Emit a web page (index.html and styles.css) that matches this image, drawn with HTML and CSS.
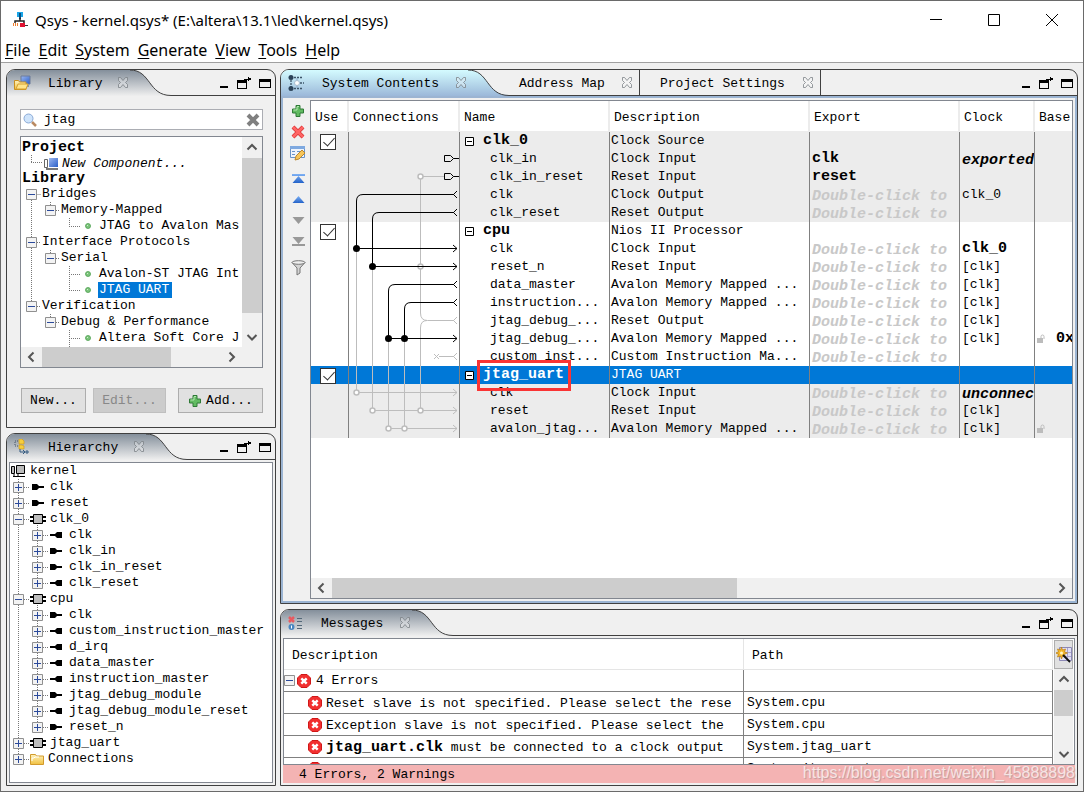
FILE: index.html
```html
<!DOCTYPE html>
<html lang="en">
<head>
<meta charset="utf-8">
<title>Qsys - kernel.qsys</title>
<link rel="stylesheet" href="styles.css">
</head>
<body>
<svg class="defs" width="0" height="0" aria-hidden="true">
  <defs>
    <linearGradient id="g-grey" x1="0" y1="0" x2="0" y2="1"><stop offset="0" stop-color="#848f9b"/><stop offset="1" stop-color="#efefef"/></linearGradient>
    <linearGradient id="g-blue" x1="0" y1="0" x2="0" y2="1"><stop offset="0" stop-color="#d4fbff"/><stop offset="1" stop-color="#9bb8d9"/></linearGradient>
    <linearGradient id="g-folder" x1="0" y1="0" x2="0" y2="1"><stop offset="0" stop-color="#fff3bd"/><stop offset="1" stop-color="#f0c040"/></linearGradient>
    <linearGradient id="g-screen" x1="0" y1="0" x2="1" y2="1"><stop offset="0" stop-color="#9db8f0"/><stop offset="1" stop-color="#2a5fc8"/></linearGradient>
    <linearGradient id="g-up" x1="0" y1="0" x2="0" y2="1"><stop offset="0" stop-color="#7fb2f5"/><stop offset="1" stop-color="#2463c9"/></linearGradient>
    <symbol id="curve-grey" viewBox="0 0 41 26"><path d="M0 0C21 0 18 25 41 25V26H0Z" fill="url(#g-grey)"/><path d="M0 0C21 0 18 25.500 41 25.500" fill="none" stroke="#404040"/></symbol>
    <symbol id="curve-blue" viewBox="0 0 41 26"><path d="M0 0C21 0 18 25 41 25V26H0Z" fill="url(#g-blue)"/><path d="M0 0C21 0 18 25.500 41 25.500" fill="none" stroke="#404040"/></symbol>
    <symbol id="close" viewBox="0 0 12 12"><path d="M1.500.5h2L6 3.500 8.500.5h2v3L8.500 5.500l2 2v3h-2L6 7.500 3.500 10.500h-2v-3l2-2-2-2Z" fill="#fff" fill-opacity=".3" stroke="#7b8187" stroke-width=".8"/></symbol>
    <symbol id="win-min" viewBox="0 0 9 14"><path d="M0 10h8v2H0z"/></symbol>
    <symbol id="win-float" viewBox="0 0 14 14"><path fill-rule="evenodd" d="M0 4h10v9H0zM1 7v5h8V7Z"/><path d="M7 3h4V1h1v1h2v2h-2v1h-1V4H9v2H7Z"/></symbol>
    <symbol id="win-max" viewBox="0 0 13 14"><path fill-rule="evenodd" d="M0 3h12v9H0zM1 6v5h10V6Z"/></symbol>
    <symbol id="plus" viewBox="0 0 14 14"><path d="M5 1.500h4V5h3.500v4H9v3.500H5V9H1.500V5H5Z" fill="#62bb62" stroke="#2f7a37"/><path d="M6 2.500h2M2.500 6H6V3" stroke="#b3e6af" fill="none"/></symbol>
    <symbol id="exp" viewBox="0 0 11 11"><path d="M.5.5h10v10H.5z" fill="#f3f3f3" stroke="#909090"/><path d="M2 5.500h7M5.500 2v7" stroke="#2b4a9b"/></symbol>
    <symbol id="col" viewBox="0 0 11 11"><path d="M.5.5h10v10H.5z" fill="#f3f3f3" stroke="#909090"/><path d="M2 5.500h7" stroke="#2b4a9b"/></symbol>
    <symbol id="box" viewBox="0 0 9 9"><path d="M.5.5h8v8h-8z" fill="#fff" stroke="#000"/><path d="M2 4.500h5" stroke="#000"/></symbol>
    <symbol id="pin-in" viewBox="0 0 14 8"><path d="M1 1h5l2 2h5v2H8L6 7H1Z"/></symbol>
    <symbol id="pin-out" viewBox="0 0 14 8"><path d="M13 1H8L6 3H1v2h5l2 2h5Z"/></symbol>
    <symbol id="chip" viewBox="0 0 16 10"><path d="M0 2h16v2H0zM0 6h16v2H0z"/><path d="M3.500.5h9v9h-9z" fill="#bdbdbd" stroke="#000"/></symbol>
    <symbol id="leaf" viewBox="0 0 6 6"><circle cx="3" cy="3" r="2.500" fill="#7cc47c" stroke="#4fa050" stroke-width=".8"/><path d="M2 2h1v1H2z" fill="#d2f0d0"/></symbol>
    <symbol id="folder" viewBox="0 0 14 12"><path d="M.5 11.500v-10h5l1 1.500h7v8.500Z" fill="url(#g-folder)" stroke="#d29a2c"/><path d="M2 8V5h2l1-1h4" stroke="#fff" fill="none"/></symbol>
    <symbol id="err" viewBox="0 0 14 14"><path d="M4 .5h6L13.500 4v6L10 13.500H4L.5 10V4Z" fill="#f23030" stroke="#d01818"/><path d="M4.300 4.300l5.400 5.400m0-5.400L4.300 9.700" stroke="#fff" stroke-width="2.400"/></symbol>
    <symbol id="lock" viewBox="0 0 8 9"><path d="M0 4h6v5H0z" fill="#bcbcbc"/><path d="M4 4V2.500Q4 1 5.500 1T7 2.500V5" stroke="#bcbcbc" fill="none"/></symbol>
    <symbol id="a-up" viewBox="0 0 12 12"><path d="M1.500 8.500 6 4l4.500 4.500" fill="none" stroke="#555" stroke-width="2"/></symbol>
    <symbol id="a-down" viewBox="0 0 12 12"><path d="M1.500 4 6 8.500 10.500 4" fill="none" stroke="#555" stroke-width="2"/></symbol>
    <symbol id="a-left" viewBox="0 0 12 12"><path d="M8.500 1.500 4 6l4.500 4.500" fill="none" stroke="#555" stroke-width="2"/></symbol>
    <symbol id="a-right" viewBox="0 0 12 12"><path d="M3.500 1.500 8 6l-4.500 4.500" fill="none" stroke="#555" stroke-width="2"/></symbol>
  </defs>
</svg>
<div class="window">
  <header class="titlebar">
    <svg width="16" height="16" viewBox="0 0 16 16"><path d="M5 0h6v5H5z" fill="#19a5e8"/><path d="M7 1h2v6H7z" fill="#0a4f80"/><path d="M8 6v3M3 11V9h9v3" fill="none" stroke="#222" stroke-width="1.500"/><path d="M1.500 14v-3m2 3v-3m2 3v-3" stroke="#f08030" fill="none"/><path d="M8 11h5v4H8z" fill="#e01030"/><path d="M13 13h3v1h-3z" fill="#333"/></svg>
    <h1>Qsys - kernel.qsys* (E:\altera\13.1\led\kernel.qsys)</h1>
    <div class="sysbuttons">
      <button type="button" aria-label="Minimize"><svg width="14" height="14" viewBox="0 0 14 14"><path d="M1 6.500h12" stroke="#000"/></svg></button>
      <button type="button" aria-label="Maximize"><svg width="14" height="14" viewBox="0 0 14 14"><path d="M1.500 1.500h11v11h-11z" fill="none" stroke="#000"/></svg></button>
      <button type="button" aria-label="Close"><svg width="14" height="14" viewBox="0 0 14 14"><path d="M1 1l12 12M13 1 1 13" stroke="#000"/></svg></button>
    </div>
  </header>
  <nav class="menu">
    <button type="button"><u>F</u>ile</button><button type="button"><u>E</u>dit</button><button type="button"><u>S</u>ystem</button><button type="button"><u>G</u>enerate</button><button type="button"><u>V</u>iew</button><button type="button"><u>T</u>ools</button><button type="button"><u>H</u>elp</button>
  </nav>
  <main class="workspace">
    <div class="side">
      <section class="panel">
        <div class="head">
          <div class="tab tab-lib">
            <svg width="17" height="16" viewBox="0 0 17 16"><path d="M7 1h9v8H7z" fill="url(#g-screen)" stroke="#6a7a9a"/><path d="M10 10h5v2h-5z" fill="#8b95a5"/><path d="M.5 14.500v-9h4l1 1.500H12v7.500Z" fill="url(#g-folder)" stroke="#c98f1f"/><path d="M2 14l2-5h10l-2 5Z" fill="#ffe48a" stroke="#d6a030"/></svg>
            <span>Library</span><svg class="x" width="12" height="12"><use href="#close"/></svg>
          </div>
          <svg class="curve" width="41" height="26"><use href="#curve-grey"/></svg>
          <div class="rest"><svg width="9" height="14"><use href="#win-min"/></svg><svg width="14" height="14"><use href="#win-float"/></svg><svg width="13" height="14"><use href="#win-max"/></svg></div>
        </div>
        <div class="lib-body">
          <label class="search">
            <svg width="14" height="14" viewBox="0 0 14 14"><path d="M9 9l4 4" stroke="#b98a62" stroke-width="2.500"/><circle cx="5.500" cy="5.500" r="4.500" fill="#cfe4fb" stroke="#8aa9d6"/></svg>
            <input type="text" value="jtag" aria-label="Search library">
            <svg width="14" height="14" viewBox="0 0 14 14"><path d="M2 2l10 10M12 2 2 12" stroke="#808080" stroke-width="4"/></svg>
          </label>
          <div class="treebox">
            <div class="tree lib-tree">
              <svg class="guides" width="222" height="211" viewBox="21 136 222 211"><g fill="none" stroke="#777" stroke-dasharray="1 1"><path d="M31.500 154v8M31 161.500h12M31.500 199v102M31.500 193.500h10M50 209.500h10M31 241.500h10M31 305.500h10M50 257.500h10M50 321.500h10M69.500 217v9M69 225.500h12M69.500 265v24M69 273.500h12M69 289.500h12M69.500 329v18M69 337.500h12M50.500 201v4M50.500 249v4M50.500 313v4"/></g></svg>
              <div class="row big">Project</div>
              <div class="row comp"><svg width="14" height="13" viewBox="0 0 14 13"><path d="M.5 1.500h3v8h-3z" fill="#fff" stroke="#666"/><path d="M5 0h9v9H5z" fill="url(#g-screen)"/><path d="M2 10h12v2H2z" fill="#777"/></svg><i>New Component...</i></div>
              <div class="row big short">Library</div>
              <div class="row l1"><svg width="11" height="11"><use href="#col"/></svg>Bridges</div>
              <div class="row l2"><svg width="11" height="11"><use href="#col"/></svg>Memory-Mapped</div>
              <div class="row l3"><svg width="6" height="6"><use href="#leaf"/></svg><span>JTAG to Avalon Mas</span></div>
              <div class="row l1"><svg width="11" height="11"><use href="#col"/></svg>Interface Protocols</div>
              <div class="row l2"><svg width="11" height="11"><use href="#col"/></svg>Serial</div>
              <div class="row l3"><svg width="6" height="6"><use href="#leaf"/></svg><span>Avalon-ST JTAG Int</span></div>
              <div class="row l3"><svg width="6" height="6"><use href="#leaf"/></svg><span class="sel">JTAG UART</span></div>
              <div class="row l1"><svg width="11" height="11"><use href="#col"/></svg>Verification</div>
              <div class="row l2"><svg width="11" height="11"><use href="#col"/></svg>Debug &amp; Performance</div>
              <div class="row l3"><svg width="6" height="6"><use href="#leaf"/></svg><span>Altera Soft Core J</span></div>
            </div>
            <div class="vbar"><svg width="12" height="12"><use href="#a-up"/></svg><i class="thumb"></i><svg width="12" height="12"><use href="#a-down"/></svg></div>
            <div class="hbar lib-h"><svg width="12" height="12"><use href="#a-left"/></svg><i class="thumb"></i><svg width="12" height="12"><use href="#a-right"/></svg></div>
          </div>
          <div class="actions">
            <button type="button" class="new">New...</button>
            <button type="button" class="edit" disabled>Edit...</button>
            <button type="button" class="add"><svg width="14" height="14"><use href="#plus"/></svg>Add...</button>
          </div>
        </div>
      </section>
      <section class="panel">
        <div class="head">
          <div class="tab tab-hier">
            <svg width="17" height="16" viewBox="0 0 17 16"><path d="M4 2H1v5h3" fill="none" stroke="#456" stroke-dasharray="1 1"/><path d="M5 0h3l2 2v3H5zM5 6h3l2 1v3H5z" fill="#f6ce3c" stroke="#cf9b1c" stroke-width=".7"/><path d="M6 10v3h5m-2-2 2 2-2 2m3-3h2v2h-2z" fill="none" stroke="#345a80"/></svg>
            <span>Hierarchy</span><svg class="x" width="12" height="12"><use href="#close"/></svg>
          </div>
          <svg class="curve" width="41" height="26"><use href="#curve-grey"/></svg>
          <div class="rest"><svg width="9" height="14"><use href="#win-min"/></svg><svg width="14" height="14"><use href="#win-float"/></svg><svg width="13" height="14"><use href="#win-max"/></svg></div>
        </div>
        <div class="tree hier-tree">
          <svg class="guides" width="262" height="304" viewBox="10 462 262 304"><g fill="none" stroke="#777" stroke-dasharray="1 1"><path d="M18.500 478v280M37.500 524v58M37.500 604v122M24 486.500h6M24 502.500h6M24 518.500h6M24 598.500h6M24 742.500h6M24 758.500h6M43 534.500h6M43 550.500h6M43 566.500h6M43 582.500h6M43 614.500h6M43 630.500h6M43 646.500h6M43 662.500h6M43 678.500h6M43 694.500h6M43 710.500h6M43 726.500h6"/></g></svg>
          <div class="row h0"><svg width="14" height="14" viewBox="0 0 14 14"><path d="M.5 2.500h3v7h-3zM5.500 1.500h8v8h-8z" fill="#bbb" stroke="#000"/><path d="M3 10v2M7 10v2M2 12.500h12" stroke="#000"/></svg>kernel</div>
          <div class="row h1"><svg width="11" height="11"><use href="#exp"/></svg><svg width="14" height="8"><use href="#pin-in"/></svg>clk</div>
          <div class="row h1"><svg width="11" height="11"><use href="#exp"/></svg><svg width="14" height="8"><use href="#pin-in"/></svg>reset</div>
          <div class="row h1"><svg width="11" height="11"><use href="#col"/></svg><svg width="16" height="10"><use href="#chip"/></svg>clk_0</div>
          <div class="row h2"><svg width="11" height="11"><use href="#exp"/></svg><svg width="14" height="8"><use href="#pin-out"/></svg>clk</div>
          <div class="row h2"><svg width="11" height="11"><use href="#exp"/></svg><svg width="14" height="8"><use href="#pin-in"/></svg>clk_in</div>
          <div class="row h2"><svg width="11" height="11"><use href="#exp"/></svg><svg width="14" height="8"><use href="#pin-in"/></svg>clk_in_reset</div>
          <div class="row h2"><svg width="11" height="11"><use href="#exp"/></svg><svg width="14" height="8"><use href="#pin-out"/></svg>clk_reset</div>
          <div class="row h1"><svg width="11" height="11"><use href="#col"/></svg><svg width="16" height="10"><use href="#chip"/></svg>cpu</div>
          <div class="row h2"><svg width="11" height="11"><use href="#exp"/></svg><svg width="14" height="8"><use href="#pin-in"/></svg>clk</div>
          <div class="row h2"><svg width="11" height="11"><use href="#exp"/></svg><svg width="14" height="8"><use href="#pin-out"/></svg>custom_instruction_master</div>
          <div class="row h2"><svg width="11" height="11"><use href="#exp"/></svg><svg width="14" height="8"><use href="#pin-out"/></svg>d_irq</div>
          <div class="row h2"><svg width="11" height="11"><use href="#exp"/></svg><svg width="14" height="8"><use href="#pin-out"/></svg>data_master</div>
          <div class="row h2"><svg width="11" height="11"><use href="#exp"/></svg><svg width="14" height="8"><use href="#pin-out"/></svg>instruction_master</div>
          <div class="row h2"><svg width="11" height="11"><use href="#exp"/></svg><svg width="14" height="8"><use href="#pin-in"/></svg>jtag_debug_module</div>
          <div class="row h2"><svg width="11" height="11"><use href="#exp"/></svg><svg width="14" height="8"><use href="#pin-out"/></svg>jtag_debug_module_reset</div>
          <div class="row h2"><svg width="11" height="11"><use href="#exp"/></svg><svg width="14" height="8"><use href="#pin-in"/></svg>reset_n</div>
          <div class="row h1"><svg width="11" height="11"><use href="#exp"/></svg><svg width="16" height="10"><use href="#chip"/></svg>jtag_uart</div>
          <div class="row h1 dir"><svg width="11" height="11"><use href="#exp"/></svg><svg width="14" height="12"><use href="#folder"/></svg>Connections</div>
        </div>
      </section>
    </div>
    <div class="center">
      <section class="panel blue">
        <div class="head">
          <div class="tab tab-sys">
            <svg width="17" height="16" viewBox="0 0 17 16"><path d="M3 2v12M3 2.500h12M3 13.500h12M9 8h7" stroke="#3c5468" stroke-width="1.300" stroke-dasharray="2 1" fill="none"/><path d="M9 3v10" stroke="#8aa8c8"/><circle cx="3" cy="2.500" r="2.500" fill="#2b4258"/><circle cx="3" cy="13.500" r="2.500" fill="#2b4258"/><circle cx="9" cy="8" r="2.500" fill="#fff" stroke="#a8bccf"/></svg>
            <span>System Contents</span><svg class="x" width="12" height="12"><use href="#close"/></svg>
          </div>
          <svg class="curve" width="41" height="26"><use href="#curve-blue"/></svg>
          <div class="rest">
            <div class="plain addr"><span>Address Map</span><svg class="x" width="12" height="12"><use href="#close"/></svg></div>
            <div class="plain proj"><span>Project Settings</span><svg class="x" width="12" height="12"><use href="#close"/></svg></div>
            <svg width="9" height="14"><use href="#win-min"/></svg><svg width="14" height="14"><use href="#win-float"/></svg><svg width="13" height="14"><use href="#win-max"/></svg>
          </div>
        </div>
        <div class="sys-body">
          <div class="tools">
            <button type="button" aria-label="Add"><svg width="14" height="14"><use href="#plus"/></svg></button>
            <button type="button" aria-label="Remove"><svg width="14" height="14" viewBox="0 0 14 14"><path d="M2 2l10 10M12 2 2 12" stroke="#d83434" stroke-width="4"/><path d="M2 2l10 10M12 2 2 12" stroke="#ff6464" stroke-width="2.500"/></svg></button>
            <button type="button" aria-label="Edit"><svg width="16" height="16" viewBox="0 0 16 16"><path d="M.5 1.500h14v11H.5z" fill="#eef4fd" stroke="#6a93c8"/><path d="M0 1h15v3H0z" fill="#7fa9e0"/><path d="M2 6.500h3M2 9.500h3M7 6.500h5" stroke="#6a93c8"/><path d="M5 15l1-4 6-6 3 3-6 6Z" fill="#f7c65a" stroke="#b98732"/></svg></button>
            <i></i>
            <button type="button" aria-label="Move to top"><svg width="13" height="12" viewBox="0 0 13 12"><path d="M0 1h13v2H0zM6.500 3l6 7H.5z" fill="url(#g-up)"/></svg></button>
            <button type="button" aria-label="Move up"><svg width="13" height="12" viewBox="0 0 13 12"><path d="M6.500 2l6 7H.5z" fill="url(#g-up)"/></svg></button>
            <button type="button" aria-label="Move down"><svg width="13" height="12" viewBox="0 0 13 12"><path d="M6.500 9l6-7H.5z" fill="#999"/></svg></button>
            <button type="button" aria-label="Move to bottom"><svg width="13" height="12" viewBox="0 0 13 12"><path d="M0 8h13v2H0zM6.500 8l6-7H.5z" fill="#999"/></svg></button>
            <i></i>
            <button type="button" aria-label="Filter"><svg width="15" height="16" viewBox="0 0 15 16"><path d="M1 2.500 6 8v7l3-2V8l5-5.500Z" fill="#d4d4d4" stroke="#777"/><ellipse cx="7.500" cy="2.500" rx="6.500" ry="1.800" fill="#eee" stroke="#777"/></svg></button>
          </div>
          <div class="gridbox">
            <table class="sys">
              <colgroup><col class="c-use"><col class="c-con"><col class="c-name"><col class="c-info"><col class="c-exp"><col class="c-clk"><col></colgroup>
              <thead><tr><th>Use</th><th>Connections</th><th>Name</th><th>Description</th><th>Export</th><th>Clock</th><th>Base</th></tr></thead>
              <tbody>
                <tr class="g"><td><input type="checkbox" checked aria-label="Use clk_0"></td><td></td><td class="mod"><svg width="9" height="9"><use href="#box"/></svg><b>clk_0</b></td><td>Clock Source</td><td></td><td></td><td></td></tr>
                <tr class="g"><td></td><td></td><td class="port">clk_in</td><td>Clock Input</td><td><b>clk</b></td><td><em>exported</em></td><td></td></tr>
                <tr class="g"><td></td><td></td><td class="port">clk_in_reset</td><td>Reset Input</td><td><b>reset</b></td><td></td><td></td></tr>
                <tr class="g"><td></td><td></td><td class="port">clk</td><td>Clock Output</td><td><em class="hint">Double-click to</em></td><td>clk_0</td><td></td></tr>
                <tr class="g"><td></td><td></td><td class="port">clk_reset</td><td>Reset Output</td><td><em class="hint">Double-click to</em></td><td></td><td></td></tr>
                <tr><td><input type="checkbox" checked aria-label="Use cpu"></td><td></td><td class="mod"><svg width="9" height="9"><use href="#box"/></svg><b>cpu</b></td><td>Nios II Processor</td><td></td><td></td><td></td></tr>
                <tr><td></td><td></td><td class="port">clk</td><td>Clock Input</td><td><em class="hint">Double-click to</em></td><td><b>clk_0</b></td><td></td></tr>
                <tr><td></td><td></td><td class="port">reset_n</td><td>Reset Input</td><td><em class="hint">Double-click to</em></td><td>[clk]</td><td></td></tr>
                <tr><td></td><td></td><td class="port">data_master</td><td>Avalon Memory Mapped ...</td><td><em class="hint">Double-click to</em></td><td>[clk]</td><td></td></tr>
                <tr><td></td><td></td><td class="port">instruction...</td><td>Avalon Memory Mapped ...</td><td><em class="hint">Double-click to</em></td><td>[clk]</td><td></td></tr>
                <tr><td></td><td></td><td class="port">jtag_debug_...</td><td>Reset Output</td><td><em class="hint">Double-click to</em></td><td>[clk]</td><td></td></tr>
                <tr><td></td><td></td><td class="port">jtag_debug_...</td><td>Avalon Memory Mapped ...</td><td><em class="hint">Double-click to</em></td><td>[clk]</td><td class="base"><svg width="8" height="9"><use href="#lock"/></svg><b>0x</b></td></tr>
                <tr><td></td><td></td><td class="port">custom_inst...</td><td>Custom Instruction Ma...</td><td><em class="hint">Double-click to</em></td><td></td><td></td></tr>
                <tr class="s"><td><input type="checkbox" checked aria-label="Use jtag_uart"></td><td></td><td class="mod"><svg width="9" height="9"><use href="#box"/></svg><b>jtag_uart</b></td><td>JTAG UART</td><td></td><td></td><td></td></tr>
                <tr class="g"><td></td><td></td><td class="port">clk</td><td>Clock Input</td><td><em class="hint">Double-click to</em></td><td><em>unconnec</em></td><td></td></tr>
                <tr class="g"><td></td><td></td><td class="port">reset</td><td>Reset Input</td><td><em class="hint">Double-click to</em></td><td>[clk]</td><td></td></tr>
                <tr class="g"><td></td><td></td><td class="port">avalon_jtag...</td><td>Avalon Memory Mapped ...</td><td><em class="hint">Double-click to</em></td><td>[clk]</td><td class="base"><svg width="8" height="9"><use href="#lock"/></svg></td></tr>
              </tbody>
            </table>
            <svg class="wires" width="110" height="306" viewBox="349 132 110 306">
              <g fill="none" stroke="#bdbdbd">
                <path d="M420.500 176.500H444M420.500 177v136q0 7.500 7 7.500H454M427 320.500q-6.500 0-6.500 7.500v82M457 317l-3.500 3.500 3.500 3.500M356.500 249v143M372.500 267v143M388.500 339v89M404.500 339v89M356 392.500h101M372 410.500h85M388 428.500h69M453 389l4 3.500-4 3.500M453 407l4 3.500-4 3.500M453 425l4 3.500-4 3.500M434 354l5 5m0-5-5 5M439 356.500h15M457 353l-3.500 3.500 3.500 3.500"/>
                <g fill="#fff" stroke-width="1.500"><circle cx="420.500" cy="176.500" r="2.500"/><circle cx="420.500" cy="266.500" r="2.500"/><circle cx="356.500" cy="392.500" r="2.500"/><circle cx="372.500" cy="410.500" r="2.500"/><circle cx="420.500" cy="410.500" r="2.500"/><circle cx="388.500" cy="428.500" r="2.500"/><circle cx="404.500" cy="428.500" r="2.500"/></g>
              </g>
              <g fill="none" stroke="#000">
                <path d="M444.500 155.500h6l3 3-3 3h-6zM453.500 158.500h6M444.500 173.500h6l3 3-3 3h-6zM453.500 176.500h6" />
                <path d="M454 194.500h-91q-6.500 0-6.500 6.500v47.500H457M457 191l-3.500 3.500 3.500 3.500M454 212.500h-75q-6.500 0-6.500 6.500v47.500H457M457 209l-3.500 3.500 3.500 3.500M453 245l4 3.500-4 3.500M453 263l4 3.500-4 3.500M454 284.500h-59q-6.500 0-6.500 6.500v47.500H457M457 281l-3.500 3.500 3.500 3.500M454 302.500h-43q-6.500 0-6.500 6.500v29.500M457 299l-3.500 3.500 3.500 3.500M453 335l4 3.500-4 3.500"/>
              </g>
              <circle cx="356.500" cy="248.500" r="3.500"/><circle cx="372.500" cy="266.500" r="3.500"/><circle cx="388.500" cy="338.500" r="3.500"/><circle cx="404.500" cy="338.500" r="3.500"/>
            </svg>
            <div class="callout"></div>
            <div class="hbar sys-h"><svg width="12" height="12"><use href="#a-left"/></svg><i class="thumb"></i><svg width="12" height="12"><use href="#a-right"/></svg></div>
          </div>
        </div>
      </section>
      <section class="panel">
        <div class="head">
          <div class="tab tab-msg">
            <svg width="16" height="16" viewBox="0 0 16 16"><path d="M1 2l5 5M6 2 1 7" stroke="#e85a60" stroke-width="2.500"/><circle cx="3.500" cy="12" r="3" fill="#4a86c0"/><path d="M3.500 10.500v3" stroke="#fff"/><path d="M9 3.500h5M9 6.500h5M9 10.500h5M9 13.500h5" stroke="#536878"/></svg>
            <span>Messages</span><svg class="x" width="12" height="12"><use href="#close"/></svg>
          </div>
          <svg class="curve" width="41" height="26"><use href="#curve-grey"/></svg>
          <div class="rest"><svg width="9" height="14"><use href="#win-min"/></svg><svg width="14" height="14"><use href="#win-float"/></svg><svg width="13" height="14"><use href="#win-max"/></svg></div>
        </div>
        <div class="msgbox">
          <div class="msgclip">
            <table class="msgs">
              <colgroup><col class="c-desc"><col></colgroup>
              <thead><tr><th>Description</th><th>Path</th></tr></thead>
              <tbody>
                <tr class="sum"><td><div><svg width="11" height="11"><use href="#col"/></svg><svg width="14" height="14"><use href="#err"/></svg><span>4 Errors</span></div></td><td></td></tr>
                <tr><td><div><svg width="14" height="14"><use href="#err"/></svg><span>Reset slave is not specified. Please select the rese</span></div></td><td>System.cpu</td></tr>
                <tr><td><div><svg width="14" height="14"><use href="#err"/></svg><span>Exception slave is not specified. Please select the</span></div></td><td>System.cpu</td></tr>
                <tr><td><div><svg width="14" height="14"><use href="#err"/></svg><span><b>jtag_uart.clk</b> must be connected to a clock output</span></div></td><td>System.jtag_uart</td></tr>
                <tr><td><div><svg width="14" height="14"><use href="#err"/></svg></div></td><td>System.jtag_uart</td></tr>
              </tbody>
            </table>
          </div>
          <div class="msgside">
            <button type="button" aria-label="Choose columns"><svg width="16" height="16" viewBox="0 0 16 16"><path d="M3.500.5h12v13h-12z" fill="#e2e0f4" stroke="#8c88b4"/><path d="M11.500 1v12M4 5.500h11M4 9.500h11" stroke="#a9a5cf"/><path d="M5.500 0l1 3 3-1-1 3 3 1-3 1 1 3-3-1-1 3-1-3-3 1 1-3-3-1 3-1-1-3 3 1Z" fill="#f6b92c" stroke="#b97c10" stroke-width=".7"/><circle cx="5.500" cy="6" r="1.500" fill="#fff6c8"/><path d="M7 8l7 7" stroke="#111" stroke-width="1.800"/></svg></button>
            <div class="vbar"><svg width="12" height="12"><use href="#a-up"/></svg><i class="thumb"></i><svg width="12" height="12"><use href="#a-down"/></svg></div>
          </div>
        </div>
        <div class="status">4 Errors, 2 Warnings</div>
      </section>
    </div>
  </main>
  <div class="mark">https://blog.csdn.net/weixin_45888898</div>
</div>
</body>
</html>
```
FILE: styles.css
```css
* { box-sizing: border-box; }
body {
  margin: 0;
  background: #f0f0f0;
  color: #000;
  font: 13px/16px "Liberation Mono", monospace;
}
svg { display: block; flex: none; }
button { font: inherit; color: inherit; cursor: default; }
.defs { position: absolute; }

.window {
  position: relative;
  display: flex;
  flex-direction: column;
  height: 100vh;
  min-height: 700px;
  border: 1px solid #6a6a6a;
}
.titlebar {
  display: flex;
  align-items: center;
  height: 37px;
  padding-left: 11px;
  background: #fff;
}
.titlebar h1 {
  flex: 1;
  margin: 0 0 0 7px;
  font: 400 15px/20px "Noto Sans", sans-serif;
  white-space: nowrap;
}
.sysbuttons { display: flex; }
.sysbuttons button {
  display: flex;
  justify-content: center;
  width: 58px;
  padding: 0 4px 0 0;
  border: 0;
  background: none;
}
.menu {
  display: flex;
  gap: 8px;
  height: 25px;
  padding-left: 4px;
  background: #fff;
  border-bottom: 1px solid #a0a0a0;
}
.menu button {
  padding: 0;
  border: 0;
  background: none;
  font: 16px/20px "Noto Sans", sans-serif;
}
.menu u { text-underline-offset: 2px; }

.workspace {
  flex: 1;
  display: grid;
  grid-template-columns: 270px minmax(0, 1fr);
  gap: 4px;
  min-height: 0;
  padding: 6px 5px 5px 5px;
}
.side, .center { display: grid; gap: 5px; min-height: 0; }
.side { grid-template-rows: auto minmax(0, 1fr); }
.center { grid-template-rows: minmax(0, 1fr) auto; }
.panel {
  display: flex;
  flex-direction: column;
  min-height: 0;
  min-width: 0;
  overflow: hidden;
  border: 1px solid #404040;
  border-radius: 9px 9px 0 0;
}

.head { display: flex; height: 26px; flex: none; }
.tab {
  display: flex;
  align-items: center;
  padding-left: 7px;
  background: linear-gradient(#848f9b, #efefef);
}
.tab span { flex: 1; margin-left: 17px; }
.head span { padding-top: 2px; }
.tab .x { margin-right: 1px; }
.tab-lib { width: 123px; }
.tab-hier { width: 139px; }
.tab-msg { width: 131px; }
.tab-sys { width: 187px; background: linear-gradient(#d4fbff, #9bb8d9); }
.rest {
  flex: 1;
  display: flex;
  align-items: center;
  justify-content: flex-end;
  gap: 8px;
  padding-right: 3px;
  border-bottom: 1px solid #404040;
}
.plain {
  align-self: stretch;
  display: flex;
  align-items: center;
  justify-content: space-between;
  padding: 0 6px 0 20px;
  border-right: 1px solid #404040;
}
.addr { width: 131px; padding-left: 10px; margin-right: -8px; }
.proj { width: 181px; margin-right: auto; }

.lib-body { padding: 13px 12px 14px 13px; }
.search {
  display: flex;
  align-items: center;
  height: 21px;
  padding: 0 2px;
  background: #fff;
  border: 1px solid #abadb3;
}
.search input {
  flex: 1;
  min-width: 0;
  padding: 0 7px;
  border: 0;
  outline: 0;
  font: inherit;
}
.treebox {
  display: grid;
  grid-template: auto 20px / minmax(0, 1fr) 20px;
  margin: 6px 0 20px;
  background: #f0f0f0;
  border: 1px solid #828790;
}
.tree { position: relative; overflow: hidden; background: #fff; }
.guides { position: absolute; top: 0; left: 0; }
.row {
  position: relative;
  display: flex;
  align-items: center;
  height: 16px;
  white-space: nowrap;
}
.lib-tree { padding: 3px 0 1px; }
.row.big { padding-left: 1px; font-size: 15px; font-weight: 700; }
.row.short { height: 14px; }
.comp { padding-left: 23px; gap: 4px; }
.l1 { padding-left: 5px; gap: 5px; }
.l2 { padding-left: 24px; gap: 5px; }
.l3 { padding-left: 64px; gap: 8px; }
.sel { margin-left: -1px; padding: 0 3px 0 1px; background: #0078d7; color: #fff; }
.vbar { display: flex; flex-direction: column; align-items: center; justify-content: space-between; padding: 4px 0; background: #f0f0f0; }
.vbar .thumb { width: 100%; flex: 1; margin: 5px 0 18px; background: #cdcdcd; }
.hbar { display: flex; align-items: center; justify-content: space-between; padding: 0 4px; background: #f0f0f0; }
.hbar .thumb { align-self: stretch; flex: 1; margin-left: 5px; background: #cdcdcd; }
.lib-h .thumb { margin-right: 55px; }
.actions { display: flex; }
.actions button {
  display: flex;
  align-items: center;
  justify-content: center;
  height: 25px;
  padding: 0;
  background: #e1e1e1;
  border: 1px solid #adadad;
}
.actions .new { width: 65px; margin-left: 1px; }
.actions .edit { width: 73px; margin-left: 7px; background: #ccc; border-color: #bfbfbf; color: #888; }
.actions .add { width: 85px; margin-left: auto; gap: 4px; }

.hier-tree { flex: 1; margin: 2px 2px 2px; border: 1px solid #828790; }
.h0 { padding-left: 1px; gap: 5px; }
.h1 { padding-left: 3px; gap: 6px; }
.h2 { padding-left: 22px; gap: 6px; }
.h1 svg + svg { width: 16px; margin-right: -2px; }
.h2 svg + svg { margin-right: 0; }
.h1.dir svg + svg { width: 14px; }

.sys-body {
  flex: 1;
  display: flex;
  min-height: 0;
  border: 2px solid #9bb4d2;
}
.tools {
  display: flex;
  flex-direction: column;
  align-items: center;
  width: 27px;
  padding: 2px 0 0 3px;
}
.tools i { height: 5px; }
.tools button {
  display: flex;
  align-items: center;
  justify-content: center;
  width: 21px;
  height: 21px;
  padding: 0;
  border: 0;
  background: none;
}
.gridbox {
  position: relative;
  flex: 1;
  display: flex;
  flex-direction: column;
  min-width: 0;
  margin: 2px 2px 2px 0;
  overflow: hidden;
  background: #fff;
  border: 1px solid #828790;
}
table { width: 100%; table-layout: fixed; border-collapse: separate; border-spacing: 0; }
th { padding: 3px 0 0 4px; font-weight: 400; text-align: left; overflow: hidden; white-space: nowrap; }
td { padding: 0 0 0 1px; white-space: nowrap; overflow: hidden; }
.c-use { width: 38px; }
.c-con { width: 111px; }
.c-name { width: 150px; }
.c-info { width: 200px; }
.c-exp { width: 150px; }
.c-clk { width: 75px; }
.sys th { height: 31px; border-right: 2px solid #ececec; border-bottom: 1px solid #ececec; }
.sys td { height: 18px; line-height: 18px; border-right: 1px solid #808080; }
.sys td:nth-child(n+5) { padding-left: 2px; }
.sys tr > :last-child { border-right: 0; }
.sys b, .sys em { display: block; height: 18px; font-size: 15px; font-weight: 700; }
.sys em { padding-top: 2px; }
.hint { color: #c8c8c8; }
.g td { background: #ececec; }
.s td { background: #0078d7; color: #fff; }
.sys .port { padding-left: 30px; }
.sys .mod b, .sys .mod svg, .sys .base b, .sys .base svg { display: inline-block; vertical-align: top; }
.sys .mod { padding-left: 5px; }
.mod svg { margin: 5px 9px 0 0; }
.sys .base { padding-left: 4px; }
.base svg { margin: 4px 11px 0 0; }
.sys input {
  appearance: none;
  display: block;
  width: 16px;
  height: 16px;
  margin: 1px 0 0 8px;
  background: #fff;
  border: 1px solid #333;
}
.sys input::after {
  content: "";
  display: block;
  width: 5px;
  height: 10px;
  margin: 0 0 0 5px;
  border: solid #333;
  border-width: 0 1px 1px 0;
  transform: rotate(42deg);
}
.wires { position: absolute; top: 31px; left: 38px; }
.callout { position: absolute; top: 259px; left: 166px; width: 94px; height: 31px; border: 3px solid #fa3434; }
.sys-h { height: 20px; margin-top: auto; }
.sys-h .thumb { flex: 0 1 405px; margin-right: auto; }

.msgbox {
  display: flex;
  height: 127px;
  margin: 2px 2px 0;
  background: #fff;
  border: 1px solid #828790;
}
.msgclip { flex: 1; min-width: 0; overflow: hidden; }
.c-desc { width: 460px; }
.msgs th { height: 31px; padding-left: 8px; border-right: 1px solid #e5e5e5; border-bottom: 1px solid #e5e5e5; }
.msgs td { height: 22px; padding: 0 0 0 3px; border-right: 1px solid #808080; border-bottom: 1px solid #808080; }
.msgs td:first-child { padding: 0; }
.msgs td div { display: flex; align-items: center; height: 21px; padding-left: 24px; gap: 4px; }
.msgs td span { padding-top: 3px; }
.msgs .sum div { padding-left: 0; gap: 2px; }
.msgs .sum span { padding: 0 0 0 3px; }
.msgs b { font-size: 15px; }
.msgside { display: flex; flex-direction: column; width: 21px; padding: 1px 1px 0; }
.msgside button { display: flex; align-items: center; justify-content: center; height: 29px; padding: 0; background: #e1e1e1; border: 1px solid #adadad; }
.msgside .vbar { flex: 1; }
.msgside .thumb { margin: 5px 0 32px; }
.status { height: 18px; margin: 0 2px 2px; padding-left: 16px; line-height: 19px; background: #f4b3b3; }
.mark {
  position: absolute;
  right: 8px;
  bottom: 8px;
  color: #f6e4e4;
  font: 16px/20px "Liberation Sans", sans-serif;
  text-shadow: 1px 1px 1px #b99;
}
```
